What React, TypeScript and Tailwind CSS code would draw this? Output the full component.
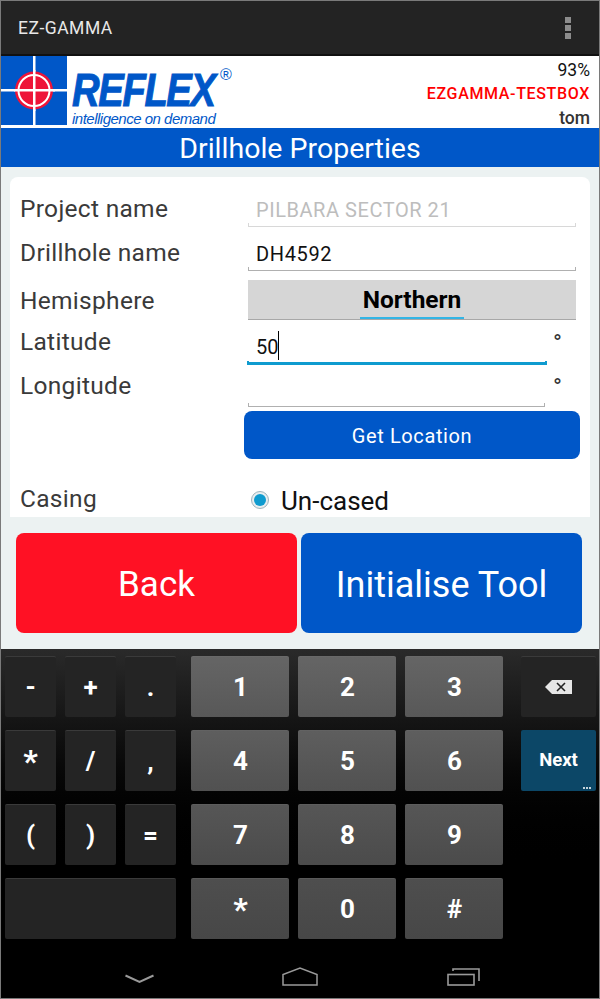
import type { ReactNode } from "react";

const numRows = [
  { keys: ["1", "2", "3"], tone: "from-[#656565] to-[#585858]" },
  { keys: ["4", "5", "6"], tone: "from-[#5e5e5e] to-[#515151]" },
  { keys: ["7", "8", "9"], tone: "from-[#565656] to-[#4b4b4b]" },
  { keys: ["*", "0", "#"], tone: "from-[#4e4e4e] to-[#474747]" },
];

const symbolRows = [
  ["-", "+", "."],
  ["*", "/", ","],
  ["(", ")", "="],
];

function Logo() {
  return (
    <div className="flex h-[72px] items-start">
      <svg width="66" height="69" viewBox="0 0 66 69" className="shrink-0">
        <rect width="66" height="69" fill="#0057c8" />
        <rect x="32" width="2.5" height="69" fill="#fff" />
        <rect y="33" width="66" height="2.5" fill="#fff" />
        <circle cx="33" cy="34.5" r="19" fill="#ee1438" />
        <circle cx="33" cy="34.5" r="15.5" fill="none" stroke="#fff" strokeWidth="2" />
        <rect x="32" y="14" width="2.5" height="41" fill="#fff" />
        <rect x="13" y="33" width="41" height="2.5" fill="#fff" />
      </svg>
      <div className="relative ml-[5px] w-[166px] font-['Liberation_Sans',sans-serif] italic text-[#0057c8]">
        <div className="mt-[17px] h-[35px] w-[146px] scale-x-[0.83] origin-left text-[46px] leading-[35px] font-bold tracking-[-1.6px] [-webkit-text-stroke:1px_#0057c8]">
          REFLEX
        </div>
        <div className="mt-[3px] text-[15px] leading-[16px] tracking-[-0.5px] whitespace-nowrap">
          intelligence on demand
        </div>
        <div className="absolute top-[11px] left-[148px] text-[16px] leading-[16px] not-italic">®</div>
      </div>
    </div>
  );
}

function Underline({ active, muted }: { active?: boolean; muted?: boolean }) {
  if (active) {
    return <div className="h-[4px] border-x-2 border-b-[3px] border-[#0f9bcf]" />;
  }
  return <div className={`h-[4px] border-x border-b ${muted ? "border-[#d8d8d8]" : "border-[#b0b0b0]"}`} />;
}

function Row({ label, height, labelOffset, children }: { label: string; height: string; labelOffset?: string; children: ReactNode }) {
  return (
    <div className={`flex ${height}`}>
      <div className={`w-[238px] shrink-0 pl-[10px] text-[24.5px] leading-[30px] tracking-[0.3px] text-[#3a3a3a] ${labelOffset ?? ""}`}>{label}</div>
      <div className="min-w-0 flex-1">{children}</div>
    </div>
  );
}

function Key({ className, children }: { className: string; children?: ReactNode }) {
  return (
    <div className={`flex h-[61px] items-center justify-center rounded-[2px] border-t border-white/10 font-bold text-white ${className}`}>
      {children}
    </div>
  );
}

export default function App() {
  return (
    <div className="flex h-[999px] w-[600px] flex-col overflow-hidden border border-[#7a7a7a] bg-black font-['Roboto',sans-serif]">
      <header className="flex h-[55px] shrink-0 items-center justify-between border-b-2 border-[#111] bg-[#232323] pr-[28px] pl-[17px] shadow-[0_1px_2px_rgba(0,0,0,0.35)]">
        <span className="pt-[2px] text-[17.5px] tracking-[0.5px] text-[#e8e8e8]">EZ-GAMMA</span>
        <div className="flex flex-col gap-[2px]">
          <span className="h-[6px] w-[6px] bg-[#8c8c8c]" />
          <span className="h-[6px] w-[6px] bg-[#8c8c8c]" />
          <span className="h-[6px] w-[6px] bg-[#8c8c8c]" />
        </div>
      </header>

      <section className="flex h-[72px] shrink-0 justify-between bg-white">
        <Logo />
        <div className="flex flex-col items-end pt-[2px] pr-[9px] text-[16px] leading-[24px]">
          <span className="text-[17.5px] text-[#111]">93%</span>
          <span className="font-medium tracking-[0.65px] text-[#ff0000]">EZGAMMA-TESTBOX</span>
          <span className="text-[17.5px] font-medium text-[#333]">tom</span>
        </div>
      </section>

      <div className="h-[39px] shrink-0 bg-[#0057c8] text-center text-[28.5px] leading-[42px] text-white">
        Drillhole Properties
      </div>

      <main className="flex h-[482px] shrink-0 flex-col bg-[#ecf2f2] pt-[10px]">
        <div className="mx-[9px] h-[340px] shrink-0 overflow-hidden rounded-t-[8px] bg-white pt-[16px] pr-[14px]">
          <Row label="Project name" height="h-[36px]" labelOffset="pt-[1px]">
            <div className="h-[30px] pl-[8px] text-[20px] leading-[34px] tracking-[0.55px] text-[#bdbdbd]">PILBARA SECTOR 21</div>
            <Underline muted />
          </Row>
          <Row label="Drillhole name" height="mt-[8px] h-[36px]" labelOffset="pt-[1px]">
            <div className="h-[30px] pl-[8px] text-[20px] leading-[34px] tracking-[0.65px] text-[#111]">DH4592</div>
            <Underline />
          </Row>
          <Row label="Hemisphere" height="mt-[7px] h-[40px]" labelOffset="pt-[6px]">
            <div className="flex h-[40px] flex-col items-center border-b border-[#a8a8a8] bg-[#d6d6d6] pt-[2px]">
              <span className="border-b-2 border-[#33b5e5] px-[3px] text-[24.5px] leading-[35px] font-bold text-black">Northern</span>
            </div>
          </Row>
          <Row label="Latitude" height="mt-[1px] h-[44px]" labelOffset="pt-[6px]">
            <div className="ml-[-1px] flex">
              <div className="w-[300px]">
                <div className="flex h-[40px] pt-[9px] pl-[9px] text-[20px] leading-[34px] text-[#111]">
                  50<span className="mt-[1px] h-[29px] w-px bg-black" />
                </div>
                <Underline active />
              </div>
              <span className="pt-[8px] pl-[6px] text-[24px] leading-[28px] text-[#333]">°</span>
            </div>
          </Row>
          <Row label="Longitude" height="h-[44px]" labelOffset="pt-[6px]">
            <div className="flex">
              <div className="w-[297px]">
                <div className="h-[38px]" />
                <Underline />
              </div>
              <span className="pt-[8px] pl-[8px] text-[24px] leading-[28px] text-[#333]">°</span>
            </div>
          </Row>
          <div className="mt-[2px] mr-[-4px] ml-[234px] flex h-[48px] items-center justify-center rounded-[8px] bg-[#0057c8] pt-[1px] text-[20px] tracking-[0.6px] text-white">
            Get Location
          </div>
          <div className="mt-[25px] flex h-[34px]">
            <div className="w-[241px] shrink-0 pl-[10px] text-[24.5px] leading-[30px] tracking-[0.3px] text-[#3a3a3a]">Casing</div>
            <div className="flex items-start">
              <span className="mt-[7px] flex h-[18px] w-[18px] items-center justify-center rounded-full border border-[#9fb4bc] bg-[#e8eef0]">
                <span className="h-[12px] w-[12px] rounded-full bg-[#0f9bcf]" />
              </span>
              <span className="ml-[12px] text-[26px] leading-[34px] text-[#111]">Un-cased</span>
            </div>
          </div>
        </div>
        <div className="mt-[16px] flex gap-[4px] pr-[17px] pl-[15px]">
          <div className="flex h-[100px] w-[281px] items-center justify-center rounded-[8px] bg-[#ff1124] pt-[4px] text-[35px] text-white">Back</div>
          <div className="flex h-[100px] flex-1 items-center justify-center rounded-[8px] bg-[#0057c8] pt-[3px] text-[36px] text-white">Initialise Tool</div>
        </div>
      </main>

      <section className="flex-1 bg-gradient-to-b from-[#2a2a2a] to-[#000] to-[65%]">
        <div className="flex pt-[7px] pl-[4px]">
          <div className="flex w-[171px] shrink-0 flex-col gap-[13px]">
            {symbolRows.map((row, i) => (
              <div key={i} className="grid grid-cols-3 gap-[9px]">
                {row.map((k) => (
                  <Key key={k} className={`bg-[#242424] ${k === "*" ? "text-[32px]" : "text-[26px]"}`}>{k}</Key>
                ))}
              </div>
            ))}
            <Key className="bg-[#242424]" />
          </div>
          <div className="ml-[15px] flex w-[312px] shrink-0 flex-col gap-[13px]">
            {numRows.map((row) => (
              <div key={row.keys[0]} className="grid grid-cols-3 gap-[9px]">
                {row.keys.map((k) => (
                  <Key key={k} className={`bg-gradient-to-b pl-[1px] ${k === "*" ? "text-[32px]" : "text-[26px]"} ${row.tone}`}>{k}</Key>
                ))}
              </div>
            ))}
          </div>
          <div className="ml-[18px] flex w-[75px] shrink-0 flex-col gap-[13px]">
            <Key className="bg-[#242424]">
              <svg width="27" height="14" viewBox="0 0 27 14">
                <path d="M0 7 L7 0 H27 V14 H7 Z" fill="#e6e6e6" />
                <path d="M12 3 L20 11 M20 3 L12 11" stroke="#222" strokeWidth="1.6" />
              </svg>
            </Key>
            <div className="relative flex h-[61px] items-center justify-center rounded-[2px] bg-[#0c4767] pt-[1px] text-[18.5px] font-bold text-white">
              Next
              <div className="absolute right-[5px] bottom-[2px] flex gap-px">
                <span className="h-[2px] w-[2px] bg-[#c5d3db]" />
                <span className="h-[2px] w-[2px] bg-[#c5d3db]" />
                <span className="h-[2px] w-[2px] bg-[#c5d3db]" />
              </div>
            </div>
          </div>
        </div>
        <nav className="relative h-[59px]">
          <svg width="29" height="10" viewBox="0 0 29 10" className="absolute top-[35px] left-[124px]" fill="none" stroke="#9a9a9a" strokeWidth="2">
            <path d="M0.5 1.5 L14.5 8 L28.5 1.5" />
          </svg>
          <svg width="36" height="19" viewBox="0 0 36 19" className="absolute top-[28px] left-[281px]" fill="none" stroke="#9a9a9a" strokeWidth="1.5">
            <path d="M1 18 V7.5 L18 1 L35 7.5 V18 Z" />
          </svg>
          <svg width="33" height="18" viewBox="0 0 33 18" className="absolute top-[29px] left-[446px]" fill="none" stroke="#9a9a9a" strokeWidth="1.6">
            <path d="M6 3 V1 H32 V13" />
            <rect x="1" y="6.5" width="26" height="10.5" />
          </svg>
        </nav>
      </section>
    </div>
  );
}
